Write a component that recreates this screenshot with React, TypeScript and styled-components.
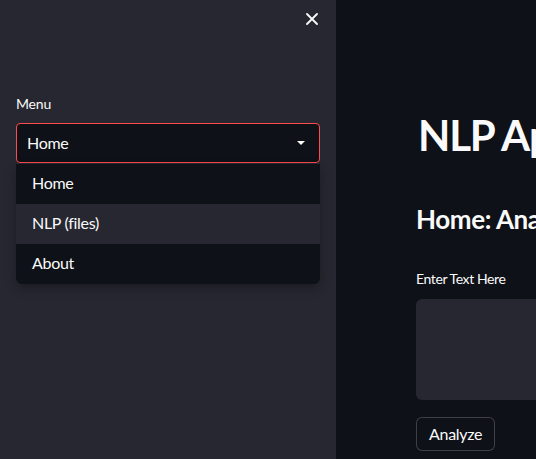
import React from 'react';
import styled, { createGlobalStyle } from 'styled-components';

const GlobalStyle = createGlobalStyle`
  html, body {
    margin: 0;
    padding: 0;
    background: #0e1117;
    overflow: hidden;
  }
  * {
    box-sizing: border-box;
  }
`;

const Page = styled.div`
  display: flex;
  width: 536px;
  height: 459px;
  overflow: hidden;
  font-family: Lato, 'Noto Sans', sans-serif;
  color: #fafafa;
`;

const Sidebar = styled.aside`
  flex: 0 0 336px;
  background: #262730;
  display: flex;
  flex-direction: column;
  padding: 0 16px;
`;

const CloseRow = styled.div`
  display: flex;
  justify-content: flex-end;
  padding: 13px 2px 0 0;
  height: 95px;
`;

const CloseButton = styled.button`
  width: 12px;
  height: 12px;
  padding: 0;
  border: none;
  background: none;
  display: flex;
  cursor: pointer;
`;

const Label = styled.label`
  font-size: 14px;
  line-height: 18px;
  margin-bottom: 10px;
  letter-spacing: -0.2px;
`;

const Select = styled.div`
  height: 40px;
  border: 1px solid #ff4b4b;
  border-radius: 4px;
  background: #0e1117;
  display: flex;
  align-items: center;
  justify-content: space-between;
  padding: 0 14px 2px 10px;
  font-size: 16px;
  letter-spacing: -0.3px;
`;

const Caret = styled.span`
  width: 0;
  height: 0;
  margin-top: 2px;
  border-left: 4px solid transparent;
  border-right: 4px solid transparent;
  border-top: 4px solid #fafafa;
`;

const Menu = styled.ul`
  list-style: none;
  margin: 1px 0 0;
  padding: 0;
  border-radius: 0 0 6px 6px;
  overflow: hidden;
  box-shadow: 0 4px 12px rgba(0, 0, 0, 0.3);
`;

const Option = styled.li<{ $hover?: boolean }>`
  height: 40px;
  display: flex;
  align-items: center;
  padding: 0 0 3px 16px;
  font-size: 16px;
  letter-spacing: -0.3px;
  background: ${p => (p.$hover ? '#262730' : '#0e1117')};
`;

const Main = styled.main`
  flex: 1;
  padding: 0 0 0 80px;
  overflow: hidden;
  white-space: nowrap;
`;

const Title = styled.h1`
  margin: 109px 0 0;
  padding-left: 2px;
  font-size: 42px;
  font-weight: 700;
  line-height: 52px;
  letter-spacing: -1.2px;
`;

const Subtitle = styled.h2`
  margin: 41px 0 0;
  font-size: 26px;
  font-weight: 700;
  line-height: 34px;
  letter-spacing: -0.4px;
`;

const FieldLabel = styled.div`
  margin-top: 34px;
  font-size: 14px;
  line-height: 18px;
  letter-spacing: -0.4px;
`;

const TextArea = styled.div`
  margin-top: 11px;
  width: 300px;
  height: 101px;
  background: #262730;
  border-radius: 6px;
`;

const Button = styled.button`
  margin-top: 17px;
  height: 34px;
  padding: 0 12px 1px;
  border: 1px solid rgba(250, 250, 250, 0.2);
  border-radius: 6px;
  background: #0e1117;
  color: #fafafa;
  font-family: inherit;
  font-size: 16px;
  letter-spacing: -0.3px;
`;

export default function App() {
  return (
    <>
      <GlobalStyle />
      <Page>
        <Sidebar>
          <CloseRow>
            <CloseButton aria-label="Close">
              <svg width="12" height="12" viewBox="0 0 12 12">
                <path d="M1 1L11 11M11 1L1 11" stroke="#fafafa" strokeWidth="1.8" strokeLinecap="round" />
              </svg>
            </CloseButton>
          </CloseRow>
          <Label>Menu</Label>
          <Select>
            <span>Home</span>
            <Caret />
          </Select>
          <Menu>
            <Option>Home</Option>
            <Option $hover>NLP (files)</Option>
            <Option>About</Option>
          </Menu>
        </Sidebar>
        <Main>
          <Title>NLP App</Title>
          <Subtitle>Home: Analyze Text</Subtitle>
          <FieldLabel>Enter Text Here</FieldLabel>
          <TextArea />
          <Button>Analyze</Button>
        </Main>
      </Page>
    </>
  );
}
